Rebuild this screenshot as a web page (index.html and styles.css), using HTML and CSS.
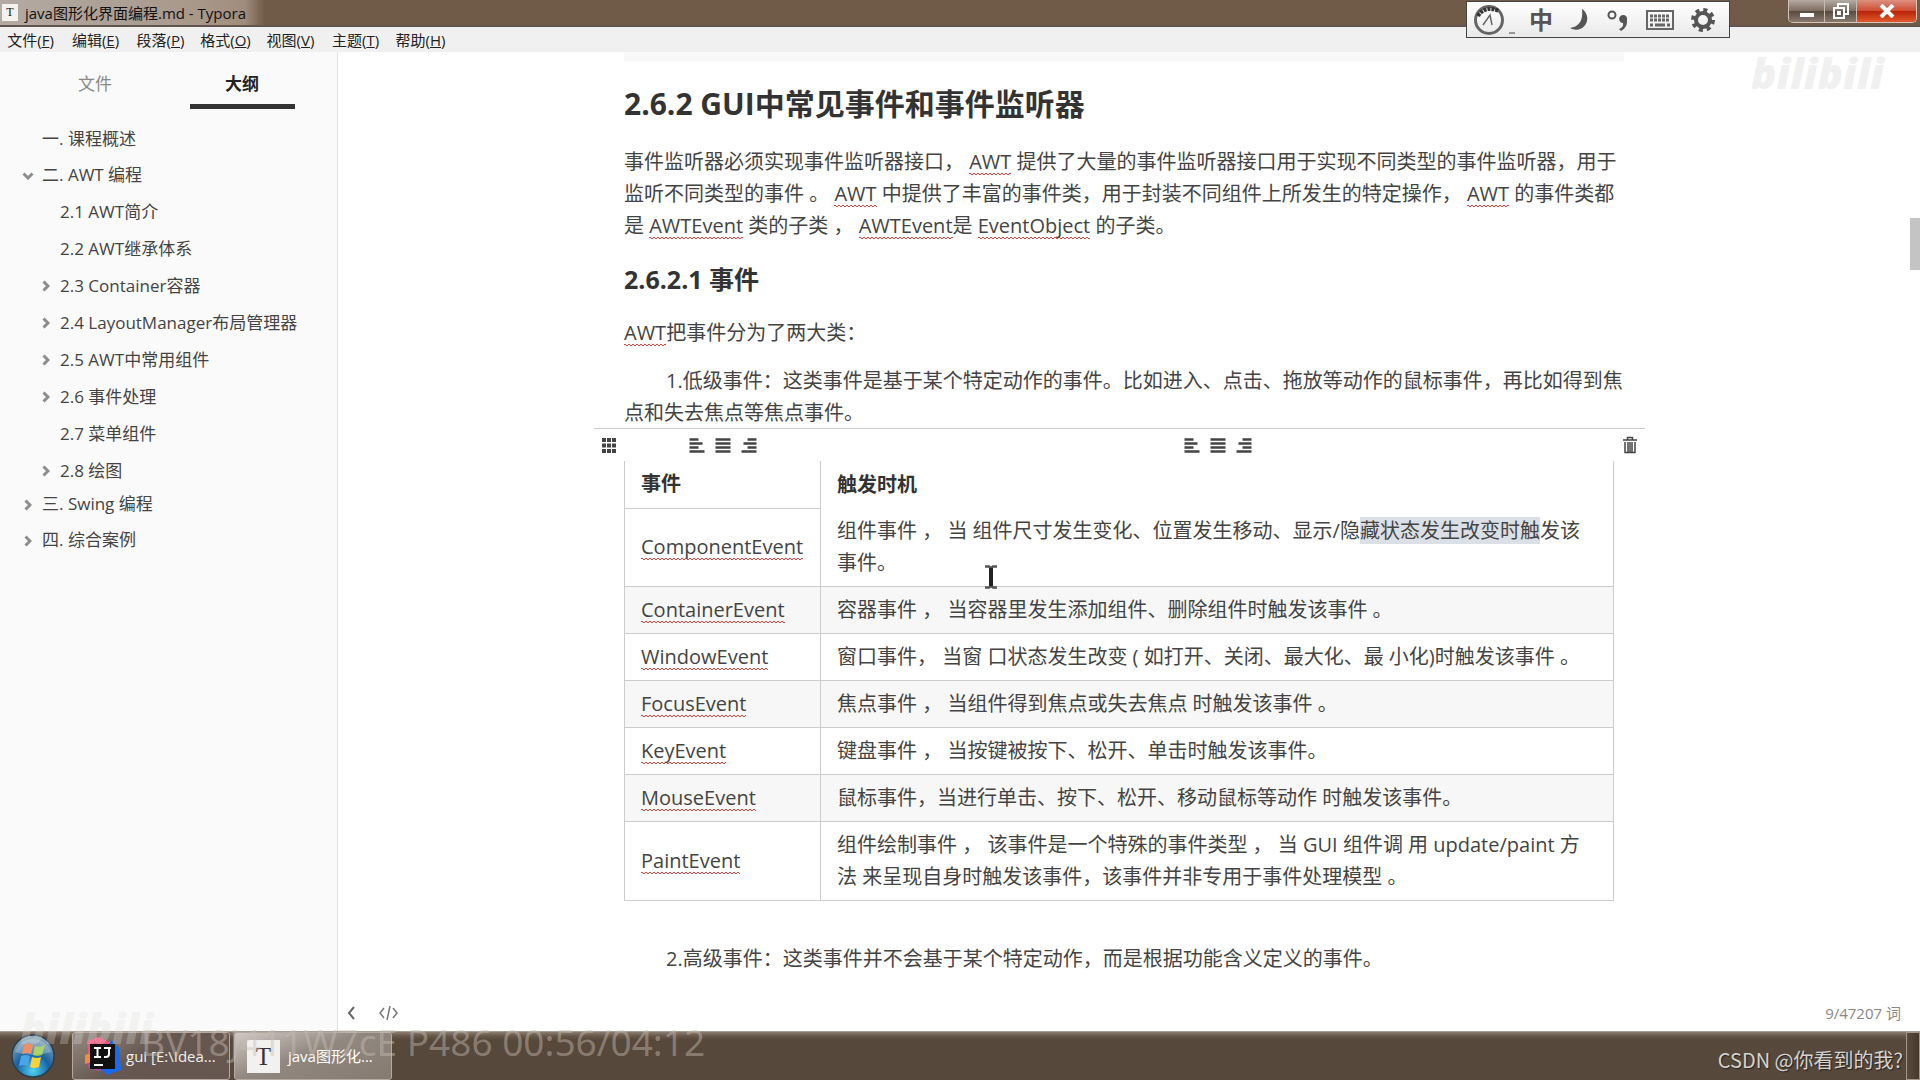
FILE: index.html
```html
<!DOCTYPE html>
<html lang="zh-CN">
<head>
  <meta charset="UTF-8" />
  <meta name="viewport" content="width=device-width, initial-scale=1.0" />
  <title>java图形化界面编程.md - Typora</title>
  <link rel="stylesheet" href="styles.css">
</head>
<body>
  <svg class="defs" aria-hidden="true">
    <symbol id="chevron" viewBox="0 0 8 12"><path d="M1.500 1.500 6 6l-4.500 4.500" fill="none" stroke="#8c8c8c" stroke-width="3"/></symbol>
    <symbol id="left" viewBox="0 0 15 15"><path d="M0 1.500h9M0 5.500h13M0 9.500h9M0 13.500h15" stroke="#444" stroke-width="2.600"/></symbol>
    <symbol id="center" viewBox="0 0 15 15"><path d="M0 1.500h15M0 5.500h15M0 9.500h15M0 13.500h15" stroke="#444" stroke-width="2.600"/></symbol>
    <symbol id="right" viewBox="0 0 15 15"><path d="M6 1.500h9M2 5.500h13M6 9.500h9M0 13.500h15" stroke="#444" stroke-width="2.600"/></symbol>
  </svg>

  <header class="titlebar">
    <span class="app-icon">T</span>
    <span class="title">java图形化界面编程.md - Typora</span>
    <div class="window-buttons">
      <button class="win-btn" aria-label="最小化"><svg width="16" height="14"><path d="M1 11h14" stroke="#fff" stroke-width="4"/></svg></button>
      <button class="win-btn win-max" aria-label="还原"><svg width="18" height="18" fill="none" stroke="#fff" stroke-width="2"><path d="M6 5V2h10v10h-3"/><path d="M2 6h10v10H2z"/><path d="M6 10h2v2H6z"/></svg></button>
      <button class="win-btn win-close" aria-label="关闭"><svg width="16" height="14"><path d="m2 1 12 12M14 1 2 13" stroke="#fff" stroke-width="4"/></svg></button>
    </div>
  </header>

  <nav class="menubar">
    <button>文件(<u>F</u>)</button>
    <button>编辑(<u>E</u>)</button>
    <button>段落(<u>P</u>)</button>
    <button>格式(<u>O</u>)</button>
    <button>视图(<u>V</u>)</button>
    <button>主题(<u>T</u>)</button>
    <button>帮助(<u>H</u>)</button>
  </nav>

  <div class="workspace">
    <aside class="sidebar">
      <div class="tabs">
        <button class="tab">文件</button>
        <button class="tab active">大纲</button>
      </div>
      <ul class="outline">
        <li><a href="#">一. 课程概述</a></li>
        <li><a href="#"><svg class="arrow open"><use href="#chevron"/></svg>二. AWT 编程</a>
          <ul>
            <li><a href="#">2.1 AWT简介</a></li>
            <li><a href="#">2.2 AWT继承体系</a></li>
            <li><a href="#"><svg class="arrow"><use href="#chevron"/></svg>2.3 Container容器</a></li>
            <li><a href="#"><svg class="arrow"><use href="#chevron"/></svg>2.4 LayoutManager布局管理器</a></li>
            <li><a href="#"><svg class="arrow"><use href="#chevron"/></svg>2.5 AWT中常用组件</a></li>
            <li><a href="#"><svg class="arrow"><use href="#chevron"/></svg>2.6 事件处理</a></li>
            <li><a href="#">2.7 菜单组件</a></li>
            <li><a href="#"><svg class="arrow"><use href="#chevron"/></svg>2.8 绘图</a></li>
          </ul>
        </li>
        <li><a href="#"><svg class="arrow"><use href="#chevron"/></svg>三. Swing 编程</a></li>
        <li><a href="#"><svg class="arrow"><use href="#chevron"/></svg>四. 综合案例</a></li>
      </ul>
    </aside>

    <main class="editor">
      <article class="write">
        <div class="code-end"></div>
        <h3>2.6.2 GUI中常见事件和事件监听器</h3>
        <p>事件监听器必须实现事件监听器接口， <span class="spell">AWT</span> 提供了大量的事件监听器接口用于实现不同类型的事件监听器，用于监听不同类型的事件 。 <span class="spell">AWT</span> 中提供了丰富的事件类，用于封装不同组件上所发生的特定操作， <span class="spell">AWT</span> 的事件类都是 <span class="spell">AWTEvent</span> 类的子类 ， <span class="spell">AWTEvent</span>是 <span class="spell">EventObject</span> 的子类。</p>
        <h4>2.6.2.1 事件</h4>
        <p><span class="spell">AWT</span>把事件分为了两大类：</p>
        <p class="indent">1.低级事件：这类事件是基于某个特定动作的事件。比如进入、点击、拖放等动作的鼠标事件，再比如得到焦点和失去焦点等焦点事件。</p>

        <figure>
          <div class="table-tools">
            <button class="tool-grid" aria-label="调整表格"><svg width="14" height="15"><path d="M0 2h14M0 7.500h14M0 13h14" stroke="#444" stroke-width="4" stroke-dasharray="4 1"/></svg></button>
            <div class="align align-first">
              <button aria-label="左对齐"><svg><use href="#left"/></svg></button>
              <button aria-label="居中"><svg><use href="#center"/></svg></button>
              <button aria-label="右对齐"><svg><use href="#right"/></svg></button>
            </div>
            <div class="align align-second">
              <button aria-label="左对齐"><svg><use href="#left"/></svg></button>
              <button aria-label="居中"><svg><use href="#center"/></svg></button>
              <button aria-label="右对齐"><svg><use href="#right"/></svg></button>
            </div>
            <button class="tool-trash" aria-label="删除表格"><svg width="14" height="18" fill="none" stroke="#444" stroke-width="1.500"><path d="M0 4h14M4.500 4V1.500h5V4M2 6v10.500h10V6M5 6v10M7 6v10M9 6v10"/></svg></button>
          </div>
          <table>
            <thead>
              <tr><th>事件</th><th>触发时机</th></tr>
            </thead>
            <tbody>
              <tr><td><span class="spell">ComponentEvent</span></td><td>组件事件 ， 当 组件尺寸发生变化、位置发生移动、显示/隐<span class="selected">藏状态发生改变时触</span>发该事件。</td></tr>
              <tr><td><span class="spell">ContainerEvent</span></td><td>容器事件 ， 当容器里发生添加组件、删除组件时触发该事件 。</td></tr>
              <tr><td><span class="spell">WindowEvent</span></td><td>窗口事件， 当窗 口状态发生改变 ( 如打开、关闭、最大化、最 小化)时触发该事件 。</td></tr>
              <tr><td><span class="spell">FocusEvent</span></td><td>焦点事件 ， 当组件得到焦点或失去焦点 时触发该事件 。</td></tr>
              <tr><td><span class="spell">KeyEvent</span></td><td>键盘事件 ， 当按键被按下、松开、单击时触发该事件。</td></tr>
              <tr><td><span class="spell">MouseEvent</span></td><td>鼠标事件，当进行单击、按下、松开、移动鼠标等动作 时触发该事件。</td></tr>
              <tr><td><span class="spell">PaintEvent</span></td><td>组件绘制事件 ， 该事件是一个特殊的事件类型 ， 当 GUI 组件调 用 update/paint 方法 来呈现自身时触发该事件，该事件并非专用于事件处理模型 。</td></tr>
            </tbody>
          </table>
          <svg class="cursor" width="14" height="24"><path d="M1 1.500h4l2 1.500 2-1.500h4M1 22.500h4l2-1.500 2 1.500h4" fill="none" stroke="#555" stroke-width="2.500"/><path d="M7 3v18" stroke="#222" stroke-width="4"/></svg>
        </figure>

        <p class="indent">2.高级事件：这类事件并不会基于某个特定动作，而是根据功能含义定义的事件。</p>
      </article>
      <footer class="status">
        <button aria-label="隐藏侧边栏"><svg width="8" height="14"><path d="M7 1 2 7l5 6" fill="none" stroke="#666" stroke-width="2"/></svg></button>
        <button aria-label="源代码模式"><svg width="19" height="14" fill="none" stroke="#777" stroke-width="1.500"><path d="M5 2 1 7l4 5M14 2l4 5-4 5M11 0 8 14"/></svg></button>
        <span class="words">9/47207 词</span>
      </footer>
    </main>
    <div class="scrollbar"><div class="thumb"></div></div>
  </div>

  <div class="taskbar">
    <button class="start" aria-label="开始">
      <svg width="44" height="44" viewBox="0 0 44 44">
        <defs>
          <radialGradient id="orb" cx="50%" cy="85%" r="80%"><stop offset="0" stop-color="#4fd2f5"/><stop offset=".5" stop-color="#17619e"/><stop offset="1" stop-color="#8fa9b8"/></radialGradient>
        </defs>
        <circle cx="22" cy="22" r="21" fill="url(#orb)" stroke="#2a3f50" stroke-width="1.500"/>
        <path d="M13 11q5-3 9 0l-2 9q-5-2-9 0z" fill="#ee6a2c"/>
        <path d="M24 12q5 2 10-1l-3 10q-5 2-9 0z" fill="#8fc63d"/>
        <path d="M10 22q5-2 9 0l-2 10q-5-2-9 0z" fill="#4aa5e8"/>
        <path d="M21 23q5 2 9 0l-2 10q-5 2-9 0z" fill="#fbd13a"/>
        <path d="M4 18A19 19 0 0 1 40 18Q22 24 4 18z" fill="#fff" opacity=".25"/>
      </svg>
    </button>
    <button class="task">
      <svg width="36" height="38" viewBox="0 0 36 38">
        <path d="M2 4 14 0l12 6-8 14-14 4z" fill="#f2557c"/>
        <path d="m26 3 8 8 2 22-14 5-8-8z" fill="#1769f0"/>
        <path d="m0 20 10-4 6 18-12-2z" fill="#b04fa0"/>
        <path d="m0 18 6-2v9l-6 2z" fill="#f58b3a"/>
        <rect x="5" y="7" width="25" height="25" fill="#111"/>
        <path d="M9 11h7M12.500 11v9M9 20h7M19 11h7M24 11v6q0 3-3 3h-2" fill="none" stroke="#fff" stroke-width="2"/>
        <path d="M9 28h9" stroke="#fff" stroke-width="2"/>
      </svg>
      gui [E:\Idea...
    </button>
    <button class="task current"><span class="t-icon">T</span>java图形化...</button>
    <button class="show-desktop" aria-label="显示桌面"></button>
  </div>

  <!-- input method toolbar, floats over the title bar -->
  <div class="ime">
    <button aria-label="输入法"><svg width="42" height="32"><circle cx="16" cy="16" r="13.500" fill="none" stroke="#666" stroke-width="3"/><path d="M5 12Q12 1 26 7" fill="none" stroke="#333" stroke-width="4" stroke-dasharray="3 1"/><path d="m10 21 7-10 2 10" fill="none" stroke="#666" stroke-width="1.500"/><path d="M36 29h6" stroke="#999" stroke-width="2"/></svg></button>
    <button class="ime-zh">中</button>
    <button aria-label="半角"><svg width="20" height="22"><path d="M12 0a11 11 0 1 1-12 19Q14 17 12 0z" fill="#555"/></svg></button>
    <button aria-label="标点"><svg width="22" height="22"><circle cx="5" cy="6" r="3.500" fill="none" stroke="#555" stroke-width="2"/><path d="M12 20q5-2 4-6a4 4 0 1 1 4-3q1 7-6 11z" fill="#555"/></svg></button>
    <button aria-label="软键盘"><svg width="28" height="20"><path d="M1 1h26v18H1z" fill="none" stroke="#666" stroke-width="2"/><path d="M4 6h20M4 10h20" stroke="#666" stroke-width="3" stroke-dasharray="3 1"/><path d="M4 15h3M9 15h10M21 15h3" stroke="#666" stroke-width="3"/></svg></button>
    <button aria-label="设置"><svg width="24" height="24"><circle cx="12" cy="12" r="7" fill="none" stroke="#555" stroke-width="4"/><circle cx="12" cy="12" r="10" fill="none" stroke="#555" stroke-width="4" stroke-dasharray="4 3.850"/></svg></button>
  </div>

  <div class="bili bili-top">bilibili</div>
  <div class="bili bili-bottom">bilibili</div>
  <div class="video-info">BV18J411W7cE P486 00:56/04:12</div>
  <div class="csdn">CSDN @你看到的我?</div>
</body>
</html>
```
FILE: styles.css
```css
* { box-sizing: border-box; }
body { margin: 0; height: 100vh; display: flex; flex-direction: column; overflow: hidden; position: relative; background: #fff; color: #444; font-family: "Open Sans", "Noto Sans CJK SC", sans-serif; font-size: 20px; line-height: 32px; }
button { border: 0; padding: 0; background: none; color: inherit; font: inherit; display: flex; align-items: center; justify-content: center; }
ul { list-style: none; margin: 0; padding: 0; }
a { color: inherit; text-decoration: none; }
.defs { display: none; }

.titlebar { height: 27px; flex: none; display: flex; align-items: center; gap: 7px; padding-left: 2px; background: linear-gradient(90deg, #b3aaa3 0, #a8988a 200px, #a08c7c 245px, #705a48 265px, #705a48 100%); border-bottom: 2px solid #5f554e; font-size: 15px; line-height: 24px; color: #111; }
.app-icon { width: 16px; height: 17px; background: #f4f2f0; font: 12px/17px "Liberation Serif", serif; text-align: center; }
.window-buttons { display: flex; align-self: flex-start; margin-left: auto; margin-right: 3px; border: 1px solid #d2c4b9; border-top: 0; border-radius: 0 0 5px 5px; overflow: hidden; }
.win-btn { width: 35px; height: 22px; background: linear-gradient(#b5aaa3, #7c6b60 50%, #594a40 50%, #8a7a6e); }
.win-max { width: 33px; border-left: 1px solid #c8bcb2; border-right: 1px solid #c8bcb2; }
.win-close { width: 59px; background: linear-gradient(#dc9080, #cf4a30 50%, #b72208 50%, #e05a2a); }

.menubar { height: 25px; flex: none; display: flex; gap: 18px; padding-left: 7px; background: #f0f0f0; color: #222; font-size: 15px; line-height: 25px; }
.menubar button { width: 47px; padding-top: 2px; white-space: nowrap; }

.workspace { flex: 1; min-height: 0; display: flex; }
.sidebar { width: 338px; flex: none; background: #fafafa; border-right: 1px solid #e2e2e2; font-size: 17px; }
.tabs { display: flex; justify-content: center; gap: 42px; padding-top: 14px; }
.tab { width: 105px; height: 43px; padding-bottom: 2px; border-bottom: 5px solid transparent; color: #888; }
.tab.active { color: #222; font-weight: bold; border-color: #333; }
.outline { padding: 12px 0 0 42px; line-height: 36px; }
.outline ul { padding-left: 18px; margin-bottom: -3px; line-height: 37px; }
.outline a { display: block; position: relative; }
.arrow { position: absolute; left: -18px; top: 13px; width: 8px; height: 12px; }
.arrow.open { transform: rotate(90deg); }

.editor { flex: 1; min-width: 0; display: flex; flex-direction: column; }
.write { width: 100%; max-width: 1000px; margin: 0 auto; flex: 1; min-height: 0; }
.code-end { height: 10px; background: #f8f8f8; }
h3, h4, p { margin: 0; }
h3, h4, th { color: #333; }
h3 { margin: 22px 0; font-size: 30px; line-height: 40px; }
h4 { margin: 20px 0; font-size: 25px; line-height: 35px; }
p { margin-bottom: 16px; }
.indent { text-indent: 42px; }
.spell { background: url("data:image/svg+xml,%3Csvg xmlns='http://www.w3.org/2000/svg' width='4' height='3'%3E%3Cpath d='M-1 3 1 1l2 2 2-2' fill='none' stroke='%23d9453c'/%3E%3C/svg%3E") repeat-x left bottom; }
.selected { background: #dbe0e6; }

figure { position: relative; margin: -17px 0 42px; }
.table-tools { display: flex; align-items: center; height: 33px; margin: 0 -21px 0 -30px; padding: 0 8px; border-top: 1px solid #ccc; }
.align { display: flex; gap: 10px; }
.align svg { width: 16px; height: 15px; display: block; }
.align-first { margin-left: 73px; }
.align-second { margin-left: 427px; }
.tool-trash { margin-left: auto; }
table { width: 990px; border-collapse: collapse; }
th, td { padding: 7px 16px; border: 1px solid #ccc; text-align: left; height: 47px; }
th { border-top: 0; }
th:first-child { width: 196px; }
th:last-child { border-bottom: 0; }
tbody tr:first-child td:last-child { border-top: 0; }
tbody tr:nth-child(even) { background: #f7f7f7; }
.cursor { position: absolute; left: 360px; top: 137px; }

.status { display: flex; align-items: center; gap: 24px; height: 36px; flex: none; padding: 0 9px; }
.words { margin-left: auto; font-size: 15px; color: #888; }
.scrollbar { width: 10px; flex: none; }
.thumb { height: 52px; margin-top: 166px; background: #c4c4c4; }

.taskbar { height: 49px; flex: none; display: flex; align-items: stretch; gap: 4px; background: linear-gradient(#8a7d71 0, #665749 4px, #56483a 8px); border-top: 1px solid #a79c92; color: #eee; font-size: 15px; }
.start { width: 68px; padding-right: 2px; }
.task { width: 158px; justify-content: flex-start; gap: 5px; padding-left: 12px; border: 1px solid #b5aaa2; border-radius: 3px; background: linear-gradient(150deg, #958a82, #655850 45%, #66564f); white-space: nowrap; }
.task.current { gap: 8px; background: linear-gradient(160deg, #cfc9c4, #918880 45%, #857a70); color: #fff; }
.t-icon { width: 33px; height: 33px; background: #f3f1ef; color: #333; font: 25px/33px "Liberation Serif", serif; text-align: center; }
.show-desktop { width: 14px; margin-left: auto; border: 1px solid #a3978c; background: linear-gradient(90deg, #5a4b3e, #46382c); }

.ime { position: absolute; top: 1px; right: 190px; width: 264px; height: 37px; display: flex; align-items: center; justify-content: space-between; padding: 0 14px 0 6px; background: linear-gradient(#fff, #e9e9e9); border: 1px solid #444; color: #555; }
.ime-zh { font-size: 24px; font-weight: bold; margin-left: -3px; }

.bili { position: absolute; font-weight: 800; font-style: italic; font-size: 42px; line-height: 50px; }
.bili-top { right: 36px; top: 48px; color: #f0f0f0; }
.bili-bottom { left: 20px; top: 1003px; color: rgba(225, 222, 220, 0.3); }
.video-info { position: absolute; left: 141px; bottom: 22px; font-size: 37px; color: rgba(200, 190, 180, 0.45); font-family: "Noto Sans", sans-serif; }
.csdn { position: absolute; right: 17px; bottom: 4px; color: #d5d2cf; text-shadow: 1px 1px 1px #222; font-family: "Noto Sans CJK SC", sans-serif; }
```
